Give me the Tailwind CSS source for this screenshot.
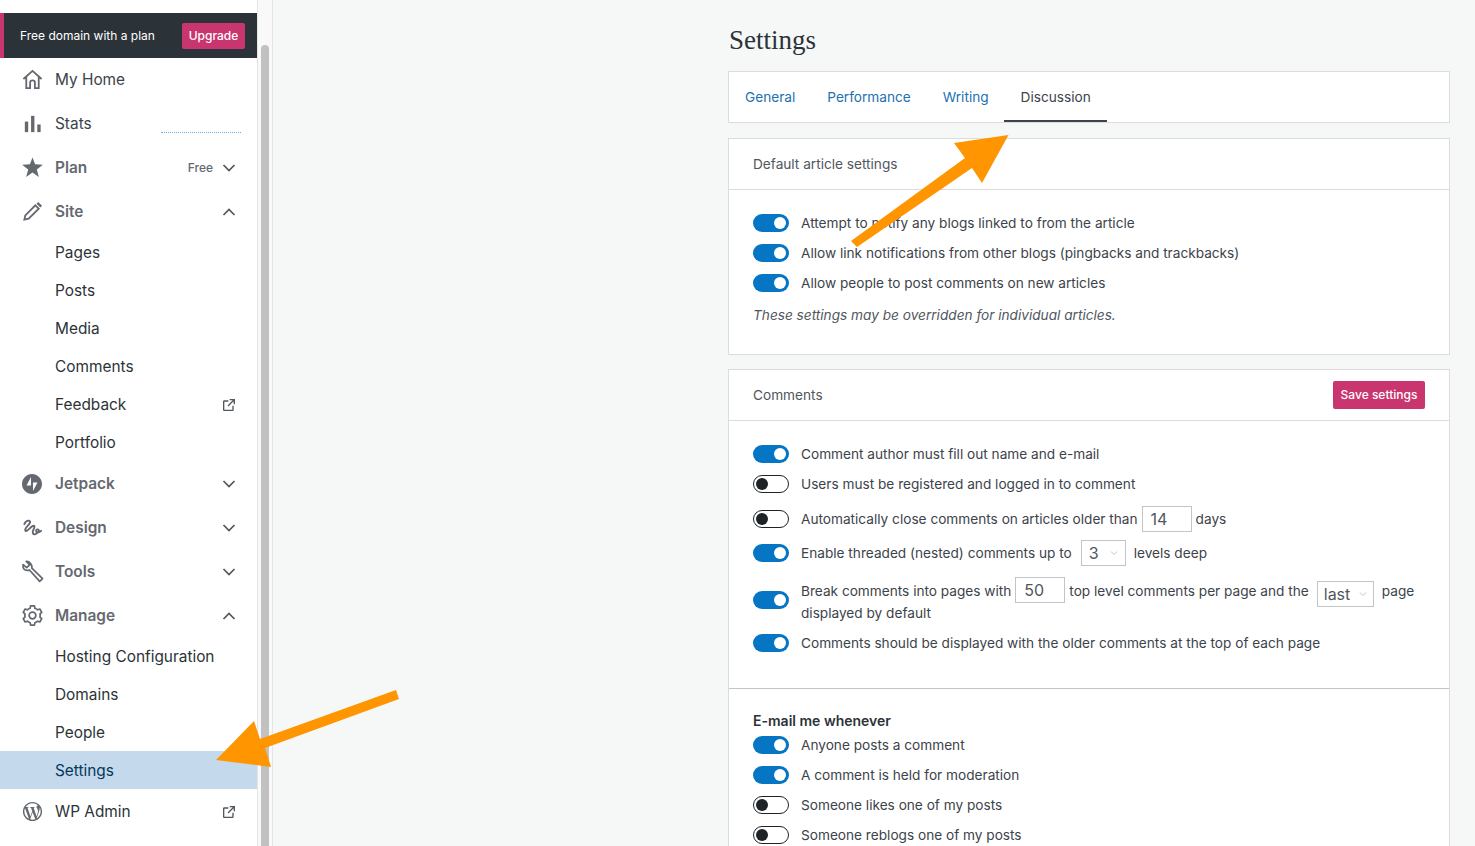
<!DOCTYPE html>
<html lang="en">
<head>
    <meta charset="UTF-8">
    <title>Settings</title>
    <script src="https://cdn.jsdelivr.net/npm/@tailwindcss/browser@4"></script>
</head>
<body class="relative h-[846px] overflow-hidden bg-[#f6f7f7] font-['Inter',sans-serif] text-[#2c3338]">
    <div class="flex h-[846px]">
        <!-- Sidebar -->
        <aside class="w-[257px] shrink-0 bg-white pt-[13px] text-[15.4px]">
            <div class="flex h-[45px] items-center justify-between border-l-[4px] border-[#c9356e] bg-[#2c3338] pl-[16px] pr-[12px] text-[12px] text-white">
                <span>Free domain with a plan</span>
                <span class="flex h-[26px] w-[63px] items-center justify-center rounded-[2px] bg-[#c9356e] font-medium">Upgrade</span>
            </div>

            <a class="flex h-[43px] items-center pl-[21px] pr-[20px] text-[#3c434a]">
                <svg class="mr-[11px] h-[23px] w-[23px]" viewBox="0 0 24 24" fill="none" stroke="#646970" stroke-width="1.9"><path d="M2.500 11.500 12 3l9.500 8.500M5.500 9.500V21H9.500v-5.500a2.500 2.500 0 0 1 5 0V21h4V9.500"/></svg>
                <span>My Home</span>
            </a>
            <a class="relative flex h-[44px] items-center pl-[21px] pr-[20px] pt-[1px] text-[#3c434a]">
                <svg class="mr-[11px] h-[23px] w-[23px]" viewBox="0 0 24 24" fill="#646970"><rect x="4" y="10" width="3.500" height="11"/><rect x="10.500" y="4" width="3.500" height="17"/><rect x="17" y="13" width="3.500" height="8"/></svg>
                <span>Stats</span>
                <span class="absolute left-[161px] top-[31px] w-[80px] border-t border-dotted border-[#72aee6]"></span>
            </a>
            <a class="flex h-[44px] items-center pl-[21px] pr-[20px] pt-[1px] font-semibold text-[#646970]">
                <svg class="mr-[11px] h-[23px] w-[23px]" viewBox="0 0 24 24" fill="#646970"><path d="M12 1.500l2.700 7.200L22.800 9l-6.300 5 2.100 7.800L12 17.300l-6.600 4.500 2.100-7.800-6.300-5 8.100-.3z"/></svg>
                <span>Plan</span>
                <span class="ml-auto mr-[8px] text-[12px] font-medium">Free</span>
                <svg class="h-[16px] w-[16px]" viewBox="0 0 16 16" fill="none" stroke="#50575e" stroke-width="1.700"><path d="M2.500 5 8 10.500 13.500 5"/></svg>
            </a>
            <a class="flex h-[44px] items-center pl-[21px] pr-[20px] pt-[1px] font-semibold text-[#646970]">
                <svg class="mr-[11px] h-[23px] w-[23px]" viewBox="0 0 24 24" fill="none" stroke="#646970" stroke-width="1.900"><path d="M3.500 20.500l1-4.500L15 5.500 18.500 9 8 19.500z"/><path fill="#646970" stroke="none" d="M16.200 3.800 18 2l4 4-1.800 1.800z"/></svg>
                <span>Site</span>
                <svg class="ml-auto h-[16px] w-[16px]" viewBox="0 0 16 16" fill="none" stroke="#50575e" stroke-width="1.700"><path d="M2.500 11 8 5.500 13.500 11"/></svg>
            </a>
            <a class="flex h-[38px] items-center pl-[55px] pr-[20px] pt-[1px]">Pages</a>
            <a class="flex h-[38px] items-center pl-[55px] pr-[20px] pt-[1px]">Posts</a>
            <a class="flex h-[38px] items-center pl-[55px] pr-[20px] pt-[1px]">Media</a>
            <a class="flex h-[38px] items-center pl-[55px] pr-[20px] pt-[1px]">Comments</a>
            <a class="flex h-[38px] items-center pl-[55px] pr-[20px] pt-[1px]">
                <span>Feedback</span>
                <svg class="ml-auto h-[16px] w-[16px]" viewBox="0 0 24 24" fill="#50575e"><path d="M19 13v6c0 1.105-.895 2-2 2H5c-1.105 0-2-.895-2-2V7c0-1.105.895-2 2-2h6v2H5v12h12v-6h2zM13 3v2h4.586l-7.793 7.793 1.414 1.414L19 6.414V11h2V3h-8z"/></svg>
            </a>
            <a class="flex h-[38px] items-center pl-[55px] pr-[20px] pt-[1px]">Portfolio</a>

            <a class="flex h-[44px] items-center pl-[20px] pr-[20px] pt-[1px] font-semibold text-[#646970]">
                <svg class="mr-[11px] h-[24px] w-[24px]" viewBox="0 0 24 24" fill="#646970"><path d="M12 2C6.500 2 2 6.500 2 12s4.500 10 10 10 10-4.500 10-10S17.500 2 12 2zm-1 11.500H6.500L11 5v8.500zm2-3h4.500L13 19v-8.500z"/></svg>
                <span>Jetpack</span>
                <svg class="ml-auto h-[16px] w-[16px]" viewBox="0 0 16 16" fill="none" stroke="#50575e" stroke-width="1.700"><path d="M2.500 5 8 10.500 13.500 5"/></svg>
            </a>
            <a class="flex h-[44px] items-center pl-[21px] pr-[20px] pt-[1px] font-semibold text-[#646970]">
                <svg class="mr-[11px] h-[23px] w-[23px]" viewBox="0 0 24 24" fill="none" stroke="#646970" stroke-width="2" stroke-linecap="round"><path d="M3.500 8.500C4.500 5.500 8.500 3.500 9.500 6 10.300 8.500 3.500 12 4.500 15 5.300 17.500 9.500 12 12 10.500 14 9.500 14.800 11 13.300 13.500 11.500 16.500 12 20 15 19 18 18 20 14.500 17.500 14 15.500 13.700 15 16.500 17 17 18.500 17.300 20 16.500 21 15.500"/></svg>
                <span>Design</span>
                <svg class="ml-auto h-[16px] w-[16px]" viewBox="0 0 16 16" fill="none" stroke="#50575e" stroke-width="1.700"><path d="M2.500 5 8 10.500 13.500 5"/></svg>
            </a>
            <a class="flex h-[44px] items-center pl-[21px] pr-[20px] pt-[1px] font-semibold text-[#646970]">
                <svg class="mr-[11px] h-[23px] w-[23px]" viewBox="0 0 24 24" fill="none" stroke="#646970" stroke-width="1.800" stroke-linejoin="round"><path d="M5.500 1.500 9 5 6 8 2.200 4.800C1.500 8 3 11 7 10.800c.7 0 1.300-.1 1.800-.4l10.700 11.900 3-2.800L11.300 8.500c.5-3.500-2-7.200-5.800-7z"/></svg>
                <span>Tools</span>
                <svg class="ml-auto h-[16px] w-[16px]" viewBox="0 0 16 16" fill="none" stroke="#50575e" stroke-width="1.700"><path d="M2.500 5 8 10.500 13.500 5"/></svg>
            </a>
            <a class="flex h-[44px] items-center pl-[21px] pr-[20px] pt-[1px] font-semibold text-[#646970]">
                <svg class="mr-[11px] h-[23px] w-[23px]" viewBox="0 0 24 24" fill="none" stroke="#646970" stroke-width="1.800" stroke-linejoin="round"><path d="M20 12c0-.568-.060-1.122-.174-1.656l1.834-1.612-2-3.464-2.322.786c-.820-.736-1.787-1.308-2.860-1.657L14 2h-4l-.480 2.396c-1.070.350-2.040.920-2.858 1.657L4.340 5.268l-2 3.464 1.834 1.612C4.060 10.878 4 11.432 4 12s.060 1.122.174 1.656L2.340 15.268l2 3.464 2.322-.786c.820.736 1.787 1.308 2.860 1.657L10 22h4l.480-2.396c1.070-.350 2.040-.920 2.858-1.657l2.322.786 2-3.464-1.834-1.612C19.940 13.122 20 12.568 20 12z"/><circle cx="12" cy="12" r="3.500"/></svg>
                <span>Manage</span>
                <svg class="ml-auto h-[16px] w-[16px]" viewBox="0 0 16 16" fill="none" stroke="#50575e" stroke-width="1.700"><path d="M2.500 11 8 5.500 13.500 11"/></svg>
            </a>
            <a class="flex h-[38px] items-center pl-[55px] pr-[20px] pt-[1px]">Hosting Configuration</a>
            <a class="flex h-[38px] items-center pl-[55px] pr-[20px] pt-[1px]">Domains</a>
            <a class="flex h-[38px] items-center pl-[55px] pr-[20px] pt-[1px]">People</a>
            <a class="flex h-[38px] items-center bg-[#c5d9ed] pl-[55px] pr-[20px] pt-[1px] text-[#043959]">Settings</a>
            <a class="flex h-[44px] items-center pl-[21px] pr-[20px] pt-[1px]">
                <svg class="mr-[11px] h-[23px] w-[23px]" viewBox="0 0 24 24" fill="#646970"><path d="M12 2C6.477 2 2 6.477 2 12s4.477 10 10 10 10-4.477 10-10S17.523 2 12 2zM3.500 12c0-1.232.264-2.402.736-3.460L8.290 19.650C5.455 18.273 3.500 15.365 3.500 12zm8.500 8.500c-.834 0-1.640-.120-2.400-.345l2.550-7.410 2.613 7.157c.017.042.038.080.060.117-.884.310-1.833.480-2.823.480zm1.172-12.485c.512-.027.973-.080.973-.080.458-.055.404-.728-.054-.702 0 0-1.377.108-2.266.108-.835 0-2.240-.108-2.240-.108-.458-.026-.510.674-.053.700 0 0 .434.055.892.082l1.324 3.630-1.860 5.578-3.096-9.208c.512-.027.973-.080.973-.080.458-.055.403-.728-.055-.702 0 0-1.376.108-2.265.108-.160 0-.347-.003-.547-.010C6.418 5.025 9.030 3.500 12 3.500c2.213 0 4.228.846 5.740 2.232-.037-.002-.072-.007-.110-.007-.835 0-1.427.727-1.427 1.510 0 .700.404 1.292.835 1.993.323.566.700 1.293.700 2.344 0 .727-.280 1.572-.646 2.748l-.848 2.833-3.072-9.138zm3.100 11.332l2.597-7.506c.484-1.212.645-2.180.645-3.044 0-.313-.020-.603-.057-.874.664 1.210 1.042 2.600 1.042 4.078 0 3.136-1.700 5.874-4.227 7.347z"/></svg>
                <span>WP Admin</span>
                <svg class="ml-auto h-[16px] w-[16px]" viewBox="0 0 24 24" fill="#50575e"><path d="M19 13v6c0 1.105-.895 2-2 2H5c-1.105 0-2-.895-2-2V7c0-1.105.895-2 2-2h6v2H5v12h12v-6h2zM13 3v2h4.586l-7.793 7.793 1.414 1.414L19 6.414V11h2V3h-8z"/></svg>
            </a>
        </aside>

        <!-- Scrollbar -->
        <div class="flex w-[16px] shrink-0 justify-center border-x border-[#e4e5e5] bg-[#f9f9f9] pt-[45px] pr-[1px]">
            <div class="h-full w-[8px] rounded-t-[4px] bg-[#c1c1c1]"></div>
        </div>

        <!-- Main -->
        <main class="flex-1 pl-[455px] pr-[25px] text-[13.65px]">
            <h1 class="flex h-[71px] items-center pl-[1px] pt-[9px] font-['Liberation_Serif',serif] text-[27px] leading-none text-[#2c3338]">Settings</h1>

            <nav class="flex h-[52px] border border-[#dcdcde] bg-white">
                <a class="flex h-[50px] items-center px-[16px] text-[#2271b1]">General</a>
                <a class="flex h-[50px] items-center px-[16px] text-[#2271b1]">Performance</a>
                <a class="flex h-[50px] items-center px-[16px] text-[#2271b1]">Writing</a>
                <a class="-ml-[1px] flex h-[50px] items-center border-b-2 border-[#3c434a] pl-[17px] pr-[16px] pt-[2px] text-[#3c434a]">Discussion</a>
            </nav>

            <section class="mt-[15px] h-[217px] border border-[#dcdcde] bg-white">
                <h2 class="flex h-[51px] items-center border-b border-[#dcdcde] px-[24px] text-[#50575e]">Default article settings</h2>
                <div class="px-[24px] pt-[18px] text-[#3c434a]">
                    <div class="flex h-[30px] items-center gap-[12px]"><span class="flex h-[18px] w-[36px] shrink-0 items-center justify-end rounded-full bg-[#0675c4] pr-[3px]"><span class="h-[12px] w-[12px] rounded-full bg-white"></span></span>Attempt to notify any blogs linked to from the article</div>
                    <div class="flex h-[30px] items-center gap-[12px]"><span class="flex h-[18px] w-[36px] shrink-0 items-center justify-end rounded-full bg-[#0675c4] pr-[3px]"><span class="h-[12px] w-[12px] rounded-full bg-white"></span></span>Allow link notifications from other blogs (pingbacks and trackbacks)</div>
                    <div class="flex h-[30px] items-center gap-[12px]"><span class="flex h-[18px] w-[36px] shrink-0 items-center justify-end rounded-full bg-[#0675c4] pr-[3px]"><span class="h-[12px] w-[12px] rounded-full bg-white"></span></span>Allow people to post comments on new articles</div>
                    <p class="mt-[7px] italic text-[#50575e]">These settings may be overridden for individual articles.</p>
                </div>
            </section>

            <section class="mt-[14px] border border-[#dcdcde] bg-white">
                <div class="flex h-[51px] items-center justify-between border-b border-[#dcdcde] px-[24px]">
                    <h2 class="text-[#50575e]">Comments</h2>
                    <button class="flex h-[28px] w-[92px] items-center justify-center rounded-[2px] bg-[#c9356e] text-[12px] font-medium text-white">Save settings</button>
                </div>
                <div class="border-b border-[#c3c4c7] px-[24px] pb-[30px] pt-[18px] text-[#3c434a]">
                    <div class="flex h-[30px] items-center gap-[12px]"><span class="flex h-[18px] w-[36px] shrink-0 items-center justify-end rounded-full bg-[#0675c4] pr-[3px]"><span class="h-[12px] w-[12px] rounded-full bg-white"></span></span>Comment author must fill out name and e-mail</div>
                    <div class="flex h-[30px] items-center gap-[12px]"><span class="flex h-[18px] w-[36px] shrink-0 items-center rounded-full border border-[#1d2327] bg-white pl-[2px]"><span class="h-[12px] w-[12px] rounded-full bg-[#1d2327]"></span></span>Users must be registered and logged in to comment</div>
                    <div class="flex h-[40px] items-center gap-[12px]">
                        <span class="flex h-[18px] w-[36px] shrink-0 items-center rounded-full border border-[#1d2327] bg-white pl-[2px]"><span class="h-[12px] w-[12px] rounded-full bg-[#1d2327]"></span></span>
                        <div class="flex items-center whitespace-nowrap"><span>Automatically close comments on articles older than</span><span class="mx-[4px] flex h-[26px] w-[50px] items-center border border-[#c3c4c7] pl-[8px] text-[16px] text-[#50575e]">14</span><span>days</span></div>
                    </div>
                    <div class="flex h-[28px] items-center gap-[12px]">
                        <span class="flex h-[18px] w-[36px] shrink-0 items-center justify-end rounded-full bg-[#0675c4] pr-[3px]"><span class="h-[12px] w-[12px] rounded-full bg-white"></span></span>
                        <div class="flex items-center whitespace-nowrap"><span>Enable threaded (nested) comments up to</span>
                            <span class="ml-[9px] mr-[8px] flex h-[26px] w-[45px] items-center justify-between border border-[#c3c4c7] px-[7px] text-[16px] text-[#50575e]">3<svg class="h-[8px] w-[8px]" viewBox="0 0 8 8" fill="none" stroke="#c3c4c7"><path d="M1 2.500 4 5.500 7 2.500"/></svg></span>
                            <span>levels deep</span></div>
                    </div>
                    <div class="flex h-[61px] items-center gap-[12px] pt-[4px]">
                        <span class="flex h-[18px] w-[36px] shrink-0 items-center justify-end rounded-full bg-[#0675c4] pr-[3px]"><span class="h-[12px] w-[12px] rounded-full bg-white"></span></span>
                        <div class="mt-[6px] self-start whitespace-nowrap">
                            <div class="flex h-[25px] items-start"><span class="leading-[28px]">Break comments into pages with</span>
                                <span class="mx-[4px] flex h-[26px] w-[50px] items-center border border-[#c3c4c7] pl-[8px] text-[16px] text-[#50575e]">50</span>
                                <span class="leading-[28px]">top level comments per page and the</span>
                                <span class="ml-[8px] mr-[8px] mt-[4px] flex h-[26px] w-[57px] items-center justify-between border border-[#c3c4c7] px-[6px] text-[16px] text-[#50575e]">last<svg class="h-[8px] w-[8px]" viewBox="0 0 8 8" fill="none" stroke="#c3c4c7"><path d="M1 2.500 4 5.500 7 2.500"/></svg></span>
                                <span class="leading-[28px]">page</span></div>
                            <div class="leading-[22px]">displayed by default</div>
                        </div>
                    </div>
                    <div class="flex h-[30px] items-center gap-[12px]"><span class="flex h-[18px] w-[36px] shrink-0 items-center justify-end rounded-full bg-[#0675c4] pr-[3px]"><span class="h-[12px] w-[12px] rounded-full bg-white"></span></span>Comments should be displayed with the older comments at the top of each page</div>
                </div>
                <div class="px-[24px] pt-[22px] text-[#3c434a]">
                    <h3 class="flex h-[19px] items-center text-[14px] font-semibold text-[#2c3338]">E-mail me whenever</h3>
                    <div class="flex h-[30px] items-center gap-[12px]"><span class="flex h-[18px] w-[36px] shrink-0 items-center justify-end rounded-full bg-[#0675c4] pr-[3px]"><span class="h-[12px] w-[12px] rounded-full bg-white"></span></span>Anyone posts a comment</div>
                    <div class="flex h-[30px] items-center gap-[12px]"><span class="flex h-[18px] w-[36px] shrink-0 items-center justify-end rounded-full bg-[#0675c4] pr-[3px]"><span class="h-[12px] w-[12px] rounded-full bg-white"></span></span>A comment is held for moderation</div>
                    <div class="flex h-[30px] items-center gap-[12px]"><span class="flex h-[18px] w-[36px] shrink-0 items-center rounded-full border border-[#1d2327] bg-white pl-[2px]"><span class="h-[12px] w-[12px] rounded-full bg-[#1d2327]"></span></span>Someone likes one of my posts</div>
                    <div class="flex h-[30px] items-center gap-[12px]"><span class="flex h-[18px] w-[36px] shrink-0 items-center rounded-full border border-[#1d2327] bg-white pl-[2px]"><span class="h-[12px] w-[12px] rounded-full bg-[#1d2327]"></span></span>Someone reblogs one of my posts</div>
                </div>
            </section>
        </main>
    </div>

    <!-- Annotation arrows drawn over the screenshot -->
    <svg class="pointer-events-none absolute left-0 top-0 h-[846px] w-[1475px]" viewBox="0 0 1475 846" fill="#ff9500">
        <polygon points="851,241 965,158 954,143 1008.500,135 982,183 972,168 857,247"/>
        <polygon points="396,690 260,739 254,721 216,760 271,767 265,748 399,699"/>
    </svg>
</body>
</html>
